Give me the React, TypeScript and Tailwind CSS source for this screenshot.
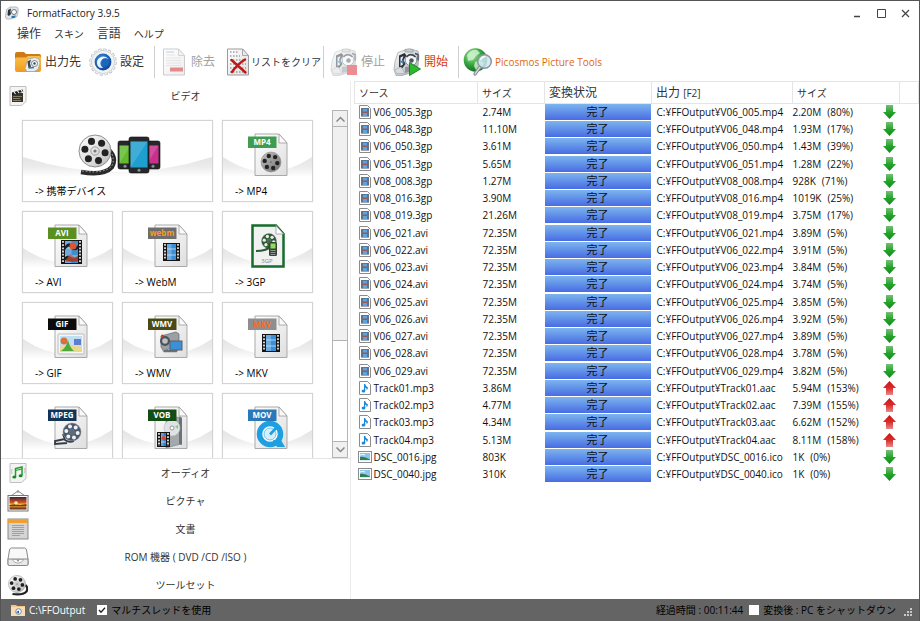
import { useState, type ReactNode } from 'react'

type Kind = 'video' | 'audio' | 'image'

const rows: { kind: Kind; name: string; size: string; out: string; outSize: string; ratio: number }[] = [
  { kind: 'video', name: 'V06_005.3gp', size: '2.74M', out: 'V06_005.mp4', outSize: '2.20M', ratio: 80 },
  { kind: 'video', name: 'V06_048.3gp', size: '11.10M', out: 'V06_048.mp4', outSize: '1.93M', ratio: 17 },
  { kind: 'video', name: 'V06_050.3gp', size: '3.61M', out: 'V06_050.mp4', outSize: '1.43M', ratio: 39 },
  { kind: 'video', name: 'V06_051.3gp', size: '5.65M', out: 'V06_051.mp4', outSize: '1.28M', ratio: 22 },
  { kind: 'video', name: 'V08_008.3gp', size: '1.27M', out: 'V08_008.mp4', outSize: '928K', ratio: 71 },
  { kind: 'video', name: 'V08_016.3gp', size: '3.90M', out: 'V08_016.mp4', outSize: '1019K', ratio: 25 },
  { kind: 'video', name: 'V08_019.3gp', size: '21.26M', out: 'V08_019.mp4', outSize: '3.75M', ratio: 17 },
  { kind: 'video', name: 'V06_021.avi', size: '72.35M', out: 'V06_021.mp4', outSize: '3.89M', ratio: 5 },
  { kind: 'video', name: 'V06_022.avi', size: '72.35M', out: 'V06_022.mp4', outSize: '3.91M', ratio: 5 },
  { kind: 'video', name: 'V06_023.avi', size: '72.35M', out: 'V06_023.mp4', outSize: '3.84M', ratio: 5 },
  { kind: 'video', name: 'V06_024.avi', size: '72.35M', out: 'V06_024.mp4', outSize: '3.74M', ratio: 5 },
  { kind: 'video', name: 'V06_025.avi', size: '72.35M', out: 'V06_025.mp4', outSize: '3.85M', ratio: 5 },
  { kind: 'video', name: 'V06_026.avi', size: '72.35M', out: 'V06_026.mp4', outSize: '3.92M', ratio: 5 },
  { kind: 'video', name: 'V06_027.avi', size: '72.35M', out: 'V06_027.mp4', outSize: '3.89M', ratio: 5 },
  { kind: 'video', name: 'V06_028.avi', size: '72.35M', out: 'V06_028.mp4', outSize: '3.78M', ratio: 5 },
  { kind: 'video', name: 'V06_029.avi', size: '72.35M', out: 'V06_029.mp4', outSize: '3.82M', ratio: 5 },
  { kind: 'audio', name: 'Track01.mp3', size: '3.86M', out: 'Track01.aac', outSize: '5.94M', ratio: 153 },
  { kind: 'audio', name: 'Track02.mp3', size: '4.77M', out: 'Track02.aac', outSize: '7.39M', ratio: 155 },
  { kind: 'audio', name: 'Track03.mp3', size: '4.34M', out: 'Track03.aac', outSize: '6.62M', ratio: 152 },
  { kind: 'audio', name: 'Track04.mp3', size: '5.13M', out: 'Track04.aac', outSize: '8.11M', ratio: 158 },
  { kind: 'image', name: 'DSC_0016.jpg', size: '803K', out: 'DSC_0016.ico', outSize: '1K', ratio: 0 },
  { kind: 'image', name: 'DSC_0040.jpg', size: '310K', out: 'DSC_0040.ico', outSize: '1K', ratio: 0 },
]

/* ---------- shared gradients ---------- */

function Defs() {
  return (
    <svg width="0" height="0" className="absolute" aria-hidden>
      <defs>
        <linearGradient id="paper" x1="0" y1="0" x2="1" y2="1">
          <stop offset="0" stopColor="#ffffff" />
          <stop offset="1" stopColor="#dedede" />
        </linearGradient>
        <linearGradient id="steel" x1="0" y1="0" x2="1" y2="1">
          <stop offset="0" stopColor="#ffffff" />
          <stop offset="1" stopColor="#a3a8ad" />
        </linearGradient>
        <linearGradient id="disc" x1="0" y1="0" x2="1" y2="1">
          <stop offset="0" stopColor="#ffffff" />
          <stop offset="0.6" stopColor="#dcdcdc" />
          <stop offset="1" stopColor="#b4b4b4" />
        </linearGradient>
        <linearGradient id="smoke" x1="0" y1="0" x2="1" y2="1">
          <stop offset="0" stopColor="#c4c4c4" />
          <stop offset="1" stopColor="#6e6e6e" />
        </linearGradient>
        <linearGradient id="swoosh" x1="0" y1="0" x2="0" y2="1">
          <stop offset="0" stopColor="#e4e4e4" />
          <stop offset="0.5" stopColor="#ececec" />
          <stop offset="1" stopColor="#ffffff" />
        </linearGradient>
        <linearGradient id="folder" x1="0" y1="0" x2="0" y2="1">
          <stop offset="0" stopColor="#fbc14b" />
          <stop offset="1" stopColor="#f09a1c" />
        </linearGradient>
        <linearGradient id="down" x1="0" y1="0" x2="0" y2="1">
          <stop offset="0" stopColor="#77bf77" />
          <stop offset="0.5" stopColor="#25a52b" />
          <stop offset="1" stopColor="#128a1c" />
        </linearGradient>
        <linearGradient id="up" x1="0" y1="0" x2="0" y2="1">
          <stop offset="0" stopColor="#c91414" />
          <stop offset="0.5" stopColor="#dc2a2a" />
          <stop offset="1" stopColor="#e58a8a" />
        </linearGradient>
        <linearGradient id="sunset" x1="0" y1="0" x2="0" y2="1">
          <stop offset="0" stopColor="#3d2440" />
          <stop offset="0.45" stopColor="#d8541c" />
          <stop offset="0.6" stopColor="#ffc23a" />
          <stop offset="1" stopColor="#5b1b14" />
        </linearGradient>
        <radialGradient id="globe" cx="0.35" cy="0.3" r="0.8">
          <stop offset="0" stopColor="#a9e8a6" />
          <stop offset="0.5" stopColor="#36a63f" />
          <stop offset="1" stopColor="#0c5a1b" />
        </radialGradient>
        <radialGradient id="blueball" cx="0.4" cy="0.35" r="0.7">
          <stop offset="0" stopColor="#3f93dc" />
          <stop offset="1" stopColor="#0b3f94" />
        </radialGradient>
      </defs>
    </svg>
  )
}

/* ---------- drawing pieces ---------- */

const holes = [10, 70, 130, 190, 250, 310]

function Reel({ cx, cy, r, body = 'url(#disc)', hole = '#222' }: { cx: number; cy: number; r: number; body?: string; hole?: string }) {
  return (
    <g>
      <circle cx={cx} cy={cy} r={r} fill={body} stroke="#8a8a8a" strokeWidth={r * 0.06} />
      {holes.map((a) => (
        <circle
          key={a}
          cx={cx + Math.cos((a * Math.PI) / 180) * r * 0.64}
          cy={cy + Math.sin((a * Math.PI) / 180) * r * 0.64}
          r={r * 0.22}
          fill={hole}
        />
      ))}
      <circle cx={cx} cy={cy} r={r * 0.26} fill="none" stroke="#9a9a9a" strokeWidth={r * 0.06} />
      <circle cx={cx} cy={cy} r={r * 0.1} fill="#777" />
    </g>
  )
}

function Strip({ x, y, w, h, fill = '#3b8fd6' }: { x: number; y: number; w: number; h: number; fill?: string }) {
  return (
    <g>
      <rect x={x} y={y} width={w} height={h} fill="#151515" />
      <rect x={x + 4} y={y + 1} width={w - 8} height={h - 2} fill={fill} />
      <rect x={x + 4} y={y + 1} width={(w - 8) / 2} height={h - 2} fill="#fff" opacity="0.25" />
      <path d={`M${x + 4} ${y + h / 3}h${w - 8}M${x + 4} ${y + (2 * h) / 3}h${w - 8}`} stroke="#d7ecfb" strokeWidth="0.7" />
      <path d={`M${x + 2} ${y + 1}v${h - 2}M${x + w - 2} ${y + 1}v${h - 2}`} stroke="#fff" strokeWidth="1.6" strokeDasharray="1.8 1.4" />
    </g>
  )
}

function Camera({ children }: { children?: ReactNode }) {
  return (
    <svg width="28" height="28" viewBox="0 0 28 28" aria-hidden>
      <path d="M5 4.500L12 2q7-1.500 13 1l1 6-1 9-4 6-12 3.500H3L1 21.500l1-8z" fill="url(#steel)" stroke="#a4a9ae" strokeWidth="0.8" />
      <path d="M12 1.500q5-1.500 8 0v2.500h-8z" fill="#c8cdd1" stroke="#858b91" strokeWidth="0.6" />
      <path d="M6 7.500l5.500-2.500 2 2.500-3 4.500 2 4-3.500 4.500-3-1.500z" fill="#2b343c" />
      <path d="M7.500 9.500l3-1.500-1.500 4 1 4.500-2.500 1.500z" fill="#e9eef2" />
      <path d="M6.500 13.500l4-1.500v4z" fill="#3c88c4" />
      <circle cx="18" cy="12" r="5.800" fill="#f3f5f6" stroke="#8b9299" />
      <path d="M13.500 9q4-4.500 9 0" stroke="#39424a" strokeWidth="1.400" fill="none" />
      <circle cx="18.500" cy="12.500" r="2.200" fill="#4b5862" />
      <path d="M22 5.500l3 1v6" stroke="#4a5259" strokeWidth="1.400" fill="none" />
      <path d="M1.500 22l6.500-3 4 6.500H4z" fill="#d8dcdf" stroke="#a0a6ab" strokeWidth="0.6" />
      <path d="M12 19l9-1-2 5-7 2z" fill="#8e969c" />
      {children}
    </svg>
  )
}

function Page({ children }: { children?: ReactNode }) {
  return (
    <svg width="22" height="28" viewBox="0 0 22 28" aria-hidden>
      <path d="M.5 1h15l6 6.500V27H.5z" fill="url(#paper)" stroke="#9b9b9b" />
      <path d="M15.500 1v6.500h6z" fill="#e9e9e9" stroke="#9b9b9b" strokeWidth="0.8" />
      {children}
    </svg>
  )
}

/* ---------- toolbar icons ---------- */

const FolderIcon = () => (
  <svg width="28" height="22" viewBox="0 0 28 22" aria-hidden>
    <path d="M1 3q0-2 2-2h7l2 2h13q2 0 2 2v3H1z" fill="#cf7a14" />
    <path d="M1 8q0-1.500 1.500-1.500H12l2-1.500h11q2 0 2 2v12q0 2-2 2H3q-2 0-2-2z" fill="url(#folder)" />
    <path d="M14 8l7-1.500 4 1.500 1 4-2 6.500-4 2h-7l-2-3z" fill="#e9edef" stroke="#9aa0a5" strokeWidth="0.7" />
    <path d="M13.500 10.500l3.500-2-1 4 1 3-2.500 2z" fill="#3a464f" />
    <circle cx="20.500" cy="12.500" r="3" fill="#fff" stroke="#7a848b" />
    <circle cx="20.500" cy="12.500" r="1.200" fill="#3a464f" />
    <path d="M15 17l5-.5" stroke="#2f7cba" strokeWidth="1.500" />
  </svg>
)

const GearIcon = () => (
  <svg width="28" height="30" viewBox="0 0 28 30" aria-hidden>
    <circle cx="14" cy="15" r="12.300" fill="none" stroke="#a3a8ac" strokeWidth="2.600" strokeDasharray="3 1.830" />
    <circle cx="14" cy="15" r="11.600" fill="#f1f2f3" stroke="#c0c4c7" strokeWidth="0.8" />
    <circle cx="14" cy="15" r="12.300" fill="none" stroke="#eef0f1" strokeWidth="1.600" strokeDasharray="2.400 2.430" strokeDashoffset="-0.300" />
    <circle cx="14" cy="15" r="8.400" fill="url(#blueball)" />
    <path d="M8.500 18.500Q6.500 13 11 10.500t8.500 1.500Q14 10.500 12 14t2 7Q10 21.500 8.500 18.500z" fill="#e9f4fc" />
    <circle cx="16.300" cy="15" r="3.800" fill="#1b67bd" />
  </svg>
)

const RemoveIcon = () => (
  <span className="opacity-50">
    <Page>
      <path d="M3 4h8" stroke="#67a9d8" />
      <path d="M3 7h9M3 10h15M3 12.500h15M3 15h15M3 17.500h15" stroke="#c3c3c3" strokeWidth="0.8" />
      <rect x="7" y="19.500" width="13" height="4" fill="#cc1818" />
    </Page>
  </span>
)

const ClearIcon = () => (
  <Page>
    <path d="M3 4h9M3 8h10M3 12h16M3 16h16M3 20h16M3 24h16" stroke="#777" strokeWidth="1.100" strokeDasharray="1.500 1.500" />
    <path d="M4.500 12l14 12.500M18 11.500Q10 16.500 5 24" stroke="#c01818" strokeWidth="2.400" fill="none" strokeLinecap="round" />
  </Page>
)

const StopIcon = () => (
  <span className="opacity-50">
    <Camera>
      <rect x="17" y="17" width="10" height="10" fill="#d81e28" />
    </Camera>
  </span>
)

const StartIcon = () => (
  <Camera>
    <path d="M16.500 14.500L27.500 21l-11 6.500z" fill="#2db82f" stroke="#0f7014" strokeWidth="0.8" />
  </Camera>
)

const GlobeIcon = () => (
  <svg width="30" height="30" viewBox="0 0 30 30" aria-hidden>
    <circle cx="12.500" cy="13" r="11.800" fill="url(#globe)" />
    <path d="M4 8Q8 2 14 3l3 3-4 3-3 4-5 1zM12 15l5-2 4 3-3 6-5 1-2-4z" fill="#d5f3d2" opacity="0.8" />
    <path d="M17 20l-5 7" stroke="#8a8f94" strokeWidth="3.400" strokeLinecap="round" />
    <path d="M17 20l-5 7" stroke="#e4e7e9" strokeWidth="1.200" strokeLinecap="round" />
    <circle cx="21.500" cy="14.500" r="6.800" fill="#cfe6f5" fillOpacity="0.85" stroke="#8b959d" strokeWidth="1.500" />
    <path d="M17.500 13q1.500-4 5-3.500" stroke="#fff" strokeWidth="1.500" fill="none" />
  </svg>
)

/* ---------- category icons ---------- */

const VideoIcon = () => (
  <svg width="18" height="20" viewBox="0 0 18 20" aria-hidden>
    <path d="M1 .5h16v15L12.500 19.500H1z" fill="#f3f3f3" stroke="#c0c0c0" />
    <rect x="3" y="7" width="11" height="9" fill="#37322a" />
    <path d="M3 6.500l10.500-3 .8 2.300L3 9z" fill="#1d1d1d" />
    <path d="M5 6l1.500 2M8.500 5l1.500 2M12 4l1.500 2" stroke="#fff" strokeWidth="1.100" />
    <path d="M4 10.500h9M4 12.500h7M4 14.500h8" stroke="#a89c84" strokeWidth="0.7" />
  </svg>
)

const AudioIcon = () => (
  <svg width="18" height="20" viewBox="0 0 18 20" aria-hidden>
    <path d="M1 .5h16v15L12.500 19.500H1z" fill="#f3f3f3" stroke="#c0c0c0" />
    <path d="M6.500 14V5.500L13 4v8.500" stroke="#22a02a" strokeWidth="1.500" fill="none" />
    <path d="M6.500 7.500L13 6" stroke="#22a02a" strokeWidth="1.200" />
    <ellipse cx="5.300" cy="14" rx="2" ry="1.500" fill="#178c20" />
    <ellipse cx="11.600" cy="12.800" rx="2" ry="1.500" fill="#178c20" />
    <path d="M3 6q-1 3 0 5M15.500 5q1 3 0 5" stroke="#aaa" strokeWidth="0.7" fill="none" />
  </svg>
)

const PictureIcon = () => (
  <svg width="22" height="22" viewBox="0 0 22 22" aria-hidden>
    <path d="M3 6.500L11 1l8 5.500" stroke="#888" fill="none" />
    <circle cx="11" cy="1.500" r="1.200" fill="#999" />
    <rect x="1" y="5.500" width="20" height="15.500" fill="#fff" stroke="#777" />
    <rect x="2.500" y="7" width="17" height="12.500" fill="url(#sunset)" />
    <path d="M2.500 15l6-1 4 1 7-1v2h-17z" fill="#3a1012" opacity="0.7" />
    <circle cx="9" cy="13" r="1.800" fill="#fff0a0" />
  </svg>
)

const DocumentIcon = () => (
  <svg width="22" height="22" viewBox="0 0 22 22" aria-hidden>
    <rect x="1" y="1" width="20" height="20" fill="#d4d4d4" stroke="#8a8a8a" />
    <rect x="1" y="1" width="20" height="4" fill="#f0a030" />
    <path d="M5 7.500h12M5 9.500h12M5 11.500h12M5 13.500h12M5 15.500h12M5 17.500h8" stroke="#9a9a9a" strokeWidth="0.9" />
  </svg>
)

const DriveIcon = () => (
  <svg width="22" height="20" viewBox="0 0 22 20" aria-hidden>
    <path d="M4.500 1h13Q19 1 19.500 3L21 12v5q0 1.500-1.500 1.500h-17Q1 18.500 1 17v-5l1.500-9Q3 1 4.500 1z" fill="#f8f8f8" stroke="#888" />
    <path d="M1 12h20v5q0 1.500-1.500 1.500h-17Q1 18.500 1 17z" fill="#e8e8e8" stroke="#888" />
    <path d="M5 12.500Q11 20 17 12.500z" fill="#fafafa" stroke="#999" strokeWidth="0.8" />
    <circle cx="11" cy="13.500" r="1" fill="#888" />
  </svg>
)

const ToolsIcon = () => (
  <svg width="20" height="21" viewBox="0 0 20 21" aria-hidden>
    <path d="M17.500 10q3 3 1 6.500-4 4-14 2.500" stroke="#222" strokeWidth="2.200" fill="none" />
    <Reel cx={9} cy={9} r={8.5} />
  </svg>
)

/* ---------- format icons ---------- */

function FormatIcon({ tag, color, ink = '#fff', children }: { tag: string; color: string; ink?: string; children: ReactNode }) {
  return (
    <svg width="40" height="44" viewBox="0 0 40 44" aria-hidden>
      <path d="M7 1h24l8 9v32.500H7z" fill="url(#paper)" stroke="#a9a9a9" />
      <path d="M31 1v9h8z" fill="#fafafa" stroke="#9c9c9c" strokeWidth="0.8" />
      {children}
      <rect x="0" y="3.500" width="28.500" height="11.500" fill={color} />
      <text x="14" y="12" textAnchor="middle" fontSize="8" fontWeight="700" fontFamily="'Open Sans', 'Liberation Sans', sans-serif" fill={ink}>
        {tag}
      </text>
    </svg>
  )
}

const phones = [
  { x: 40, y: 7, w: 14, h: 28, fill: '#62bb2f' },
  { x: 68, y: 7, w: 14, h: 28, fill: '#c92f8c' },
  { x: 51, y: 3, w: 20, h: 36, fill: '#1f9fd0' },
]

const MobileIcon = () => (
  <svg width="87" height="43" viewBox="-4 0 87 43" aria-hidden>
    {phones.map((p) => (
      <g key={p.fill}>
        <rect x={p.x} y={p.y} width={p.w} height={p.h} rx="2" fill="#26282b" stroke="#0e0e0e" strokeWidth="0.6" />
        <rect x={p.x + 1.5} y={p.y + 4.5} width={p.w - 3} height={p.h - 10} fill={p.fill} />
        <path d={`M${p.x + 1.5} ${p.y + p.h - 5.5}L${p.x + p.w - 1.5} ${p.y + 4.5}H${p.x + 1.5}z`} fill="#fff" opacity="0.15" />
        <circle cx={p.x + p.w / 2} cy={p.y + p.h - 2.7} r="1.500" fill="#8a8f94" />
      </g>
    ))}
    <path d="M31 16q8 8 3 17-8 9-31 5" stroke="#2a2a2a" strokeWidth="4.500" fill="none" />
    <path d="M34 20q3 8-1 13-8 7-29 4" stroke="#ccc" strokeWidth="0.8" fill="none" strokeDasharray="1.500 2" />
    <Reel cx={17} cy={17} r={16} />
  </svg>
)

const ThreeGpIcon = () => (
  <svg width="34" height="44" viewBox="0 0 34 44" aria-hidden>
    <path d="M1.500 1.500H25L32.500 10v32.500h-31z" fill="#f1f1f1" stroke="#176b2c" strokeWidth="2.500" />
    <path d="M25 1.500V10h7.500z" fill="#fff" stroke="#999" strokeWidth="0.8" />
    <Reel cx={18} cy={17} r={7.5} body="#2c5a36" hole="#e8eee9" />
    <path d="M5 27q10 0 14-4" stroke="#2c5a36" strokeWidth="2" fill="none" />
    <rect x="18" y="18" width="8" height="14" rx="1.500" fill="#39403b" />
    <rect x="19.500" y="19.500" width="5" height="5" fill="#8ede5c" />
    <path d="M19.500 26.500h5M19.500 28.500h5M19.500 30.500h5" stroke="#aab0ab" strokeWidth="0.8" />
    <text x="16" y="39" textAnchor="middle" fontSize="6" fontFamily="'Open Sans', sans-serif" fill="#888">3GP</text>
  </svg>
)

// tiles without a caption only carry the name printed on their icon
const tiles: { name: string; caption?: boolean; wide?: boolean; icon: ReactNode }[] = [
  { name: '携帯デバイス', caption: true, wide: true, icon: <MobileIcon /> },
  {
    name: 'MP4',
    caption: true,
    icon: (
      <FormatIcon tag="MP4" color="#3f9d52">
        <Reel cx={23} cy={29} r={10} body="url(#smoke)" />
      </FormatIcon>
    ),
  },
  {
    name: 'AVI',
    caption: true,
    icon: (
      <FormatIcon tag="AVI" color="#5a8f22">
        <Strip x={13} y={16} w={21} h={24} fill="#3f8fd0" />
        <path d="M17 22q4-5 7-1t6 0v4q-5 3-7-1t-6 2zM17 33q3-3 6 0t7-1v5l-6 1-7-2z" fill="#17202c" />
        <circle cx="25" cy="22" r="3.500" fill="#e2552a" />
        <path d="M18 36l4-6 5 4 3-3v7H18z" fill="#d34f2c" opacity="0.7" />
      </FormatIcon>
    ),
  },
  {
    name: 'WebM',
    caption: true,
    icon: (
      <FormatIcon tag="webm" color="#6e6e6e" ink="#ff9a1a">
        <Strip x={15} y={19} w={17} h={18} />
      </FormatIcon>
    ),
  },
  { name: '3GP', caption: true, icon: <ThreeGpIcon /> },
  {
    name: 'GIF',
    caption: true,
    icon: (
      <FormatIcon tag="GIF" color="#0c0c0c">
        <rect x="10" y="19" width="26" height="20" rx="1" fill="#f6f6f6" stroke="#bdbdbd" />
        <rect x="12" y="21" width="22" height="16" fill="#bfe0f2" />
        <path d="M12 32q10-4 22 0v5H12z" fill="#e9d98c" />
        <circle cx="16" cy="26" r="3.500" fill="#d9713c" />
        <rect x="26" y="24" width="7" height="6" fill="#5d7fd0" />
        <path d="M20 25q2 8 6 11H13q5-3 7-11z" fill="#4fa83a" />
      </FormatIcon>
    ),
  },
  {
    name: 'WMV',
    caption: true,
    icon: (
      <FormatIcon tag="WMV" color="#4b4a16">
        <path d="M13 21l15-4 3 2v8l-15 10-3-5z" fill="#9aa0a5" stroke="#666" strokeWidth="0.7" />
        <circle cx="17" cy="26" r="5" fill="#4c5257" />
        <circle cx="17" cy="26" r="2.800" fill="#b9c0c6" />
        <path d="M16 36h12l2-3" stroke="#6a7075" strokeWidth="2.500" fill="none" />
        <circle cx="14.500" cy="21" r="1.500" fill="#d23b2a" />
        <rect x="22" y="26" width="12" height="9" fill="#3c90d6" stroke="#5b6166" />
      </FormatIcon>
    ),
  },
  {
    name: 'MKV',
    caption: true,
    icon: (
      <FormatIcon tag="MKV" color="#8e8e8e" ink="#ff6a14">
        <Strip x={14} y={19} w={18} h={18} />
      </FormatIcon>
    ),
  },
  {
    name: 'MPEG',
    icon: (
      <FormatIcon tag="MPEG" color="#143455">
        <path d="M15 28l2 6q4 3 9 1M17 33l-10 2v3l12-1" stroke="#333b46" strokeWidth="1.800" fill="none" />
        <Reel cx={24} cy={26} r={9} body="#4a5a70" hole="#f0f2f5" />
      </FormatIcon>
    ),
  },
  {
    name: 'VOB',
    icon: (
      <FormatIcon tag="VOB" color="#124d16">
        <path d="M18 12l15-1v27l-15 4z" fill="#a3a9ad" stroke="#777" strokeWidth="0.6" />
        <path d="M31 11l3 1v27l-3-1z" fill="#6c7378" />
        <circle cx="24" cy="22" r="8" fill="#dfe3e5" stroke="#b5b9bc" strokeWidth="0.6" />
        <circle cx="24" cy="22" r="2" fill="#fff" stroke="#999" />
        <path d="M27 20.500l3-1.500v4z" fill="#7fd16c" />
        <Strip x={9} y={26} w={13} h={15} fill="#2f7fd0" />
        <circle cx="15.500" cy="32" r="2" fill="#d8482c" />
      </FormatIcon>
    ),
  },
  {
    name: 'MOV',
    icon: (
      <FormatIcon tag="MOV" color="#2a78b8">
        <circle cx="22" cy="28" r="10.500" fill="#fff" stroke="#1e9fe2" strokeWidth="5.500" />
        <circle cx="22" cy="28" r="6" fill="#d8effb" stroke="#6fc3ee" strokeWidth="1" />
        <path d="M22 28.500l6-6.500" stroke="#1e9fe2" strokeWidth="2.600" />
        <path d="M25 34h8l4 7h-8z" fill="#1e9fe2" />
      </FormatIcon>
    ),
  },
]

const categories = [
  { label: 'オーディオ', icon: <AudioIcon /> },
  { label: 'ピクチャ', icon: <PictureIcon /> },
  { label: '文書', icon: <DocumentIcon /> },
  { label: 'ROM 機器 ( DVD /CD /ISO )', icon: <DriveIcon /> },
  { label: 'ツールセット', icon: <ToolsIcon /> },
]

/* ---------- list icons ---------- */

function FileIcon({ kind }: { kind: Kind }) {
  if (kind === 'image') {
    return (
      <svg width="14" height="12" viewBox="0 0 14 12" className="shrink-0" aria-hidden>
        <rect x=".5" y=".5" width="13" height="11" fill="#fff" stroke="#8c8c8c" />
        <rect x="2" y="2" width="10" height="8" fill="#8cc4ec" />
        <path d="M2 6q4-1 10 2.500V9H2z" fill="#2f7d52" />
        <path d="M2 9h10v1H2z" fill="#dcebf5" />
        <path d="M2 4q3-1 5 0" stroke="#fff" fill="none" />
      </svg>
    )
  }
  return (
    <svg width="12" height="14" viewBox="0 0 12 14" className="mx-px shrink-0" aria-hidden>
      <path d="M.5.5h8l3 3v10H.5z" fill="#fff" stroke="#8c8c8c" />
      {kind === 'video' ? (
        <g>
          <rect x="2" y="3" width="8" height="8.500" fill="#3d4f66" />
          <rect x="4" y="3.500" width="4" height="3.300" fill="#5aa5e0" />
          <rect x="4" y="7.700" width="4" height="3.300" fill="#5aa5e0" />
          <path d="M4 7.200h4" stroke="#d04a3a" />
          <path d="M3 3.500v8M9 3.500v8" stroke="#fff" strokeWidth="0.8" strokeDasharray="1 1" />
        </g>
      ) : (
        <g fill="#1e88d8">
          <path d="M5 3h1.200q.3 2 2.800 3.500-.2 2-1.500 2.500.6-2-1.300-2.500V10H5z" />
          <ellipse cx="4.500" cy="10" rx="1.900" ry="1.500" />
        </g>
      )}
    </svg>
  )
}

function Arrow({ up }: { up: boolean }) {
  return (
    <svg width="13" height="14" viewBox="0 0 13 14" className="shrink-0" aria-hidden>
      {up ? <path d="M6.500 0L13 7H10v7H3V7H0z" fill="url(#up)" /> : <path d="M3 0h7v7h3l-6.500 7L0 7h3z" fill="url(#down)" />}
    </svg>
  )
}

function Tile({ name, caption, wide, icon }: { name: string; caption?: boolean; wide?: boolean; icon: ReactNode }) {
  return (
    <button
      aria-label={name}
      className={`relative flex h-[82px] flex-col items-start border border-[#d4d4d4] bg-white shadow-[0_0_1px_#d4d4d4] ${wide ? 'col-span-2' : ''}`}
    >
      <svg className="absolute inset-0 h-full w-full" viewBox="0 0 100 80" preserveAspectRatio="none" aria-hidden>
        <path d="M0 36Q50 66 100 36V56H0z" fill="url(#swoosh)" />
      </svg>
      <span className="relative mt-3 flex h-11 w-full items-center justify-center">{icon}</span>
      {caption && <span className="relative mt-1 pl-3 text-[10px] leading-5 text-black">-&gt; {name}</span>}
    </button>
  )
}

function ToolButton({ icon, label, className = '' }: { icon: ReactNode; label: string; className?: string }) {
  return (
    <button className={`flex items-center whitespace-nowrap leading-4 ${className}`}>
      {icon}
      {label}
    </button>
  )
}

const Separator = () => <span className="h-8 w-px bg-[#cfcfcf]" />

export default function App() {
  const [multi, setMulti] = useState(true)
  const [shutdown, setShutdown] = useState(false)

  return (
    <div className="flex h-screen flex-col overflow-hidden border-t border-r border-l border-[#555] bg-white font-['Open_Sans','Noto_Sans_CJK_JP',sans-serif] text-[12px] text-[#333]">
      <Defs />

      <header className="flex h-6 shrink-0 items-center pr-2 pl-1">
        <svg width="14" height="14" viewBox="0 0 28 28" aria-hidden>
          <path d="M10 2h13l3 2v9l-3 9-12 4H3l-2-4 2-15z" fill="#e1e6ea" stroke="#a0a8b0" strokeWidth="1.500" />
          <path d="M6 8l6-3-1 6 1 5-4 4-3-2z" fill="#2b343c" />
          <circle cx="18" cy="12" r="5" fill="#fff" stroke="#6c767e" strokeWidth="2" />
          <path d="M13 20l9-1-3 5h-6z" fill="#2678b8" />
        </svg>
        <h1 className="ml-2 text-[10px] text-[#222]">FormatFactory 3.9.5</h1>
        <div className="ml-auto flex gap-3">
          <button aria-label="最小化" className="flex size-3 items-center justify-center">
            <svg width="9" height="9" viewBox="0 0 9 9"><path d="M1 7.500h6" stroke="#444" strokeWidth="1.500" /></svg>
          </button>
          <button aria-label="最大化" className="flex size-3 items-center justify-center">
            <svg width="9" height="9" viewBox="0 0 9 9"><path d="M.5.5h8v8h-8z" fill="none" stroke="#444" /></svg>
          </button>
          <button aria-label="閉じる" className="flex size-3 items-center justify-center">
            <svg width="9" height="9" viewBox="0 0 9 9"><path d="M1 1l7 7M8 1L1 8" stroke="#444" strokeWidth="1.200" /></svg>
          </button>
        </div>
      </header>

      <nav className="flex h-[18px] shrink-0 items-center gap-[13px] pl-4 leading-4">
        <button>操作</button>
        <button className="text-[10px]">スキン</button>
        <button>言語</button>
        <button className="text-[10px]">ヘルプ</button>
      </nav>

      <div className="flex h-[38px] shrink-0 items-center pl-[13px]">
        <ToolButton icon={<FolderIcon />} label="出力先" className="gap-[3px]" />
        <ToolButton icon={<GearIcon />} label="設定" className="ml-2 gap-[3px]" />
        <span className="w-2.5" />
        <Separator />
        <ToolButton icon={<RemoveIcon />} label="除去" className="ml-2 gap-1.5 text-[#a0a0a0]" />
        <ToolButton icon={<ClearIcon />} label="リストをクリア" className="ml-3 gap-0.5 text-[10px]" />
        <span className="w-0.5" />
        <Separator />
        <ToolButton icon={<StopIcon />} label="停止" className="ml-1.5 gap-[3px] text-[#a0a0a0]" />
        <ToolButton icon={<StartIcon />} label="開始" className="ml-2 gap-[3px] text-[#d83a10]" />
        <span className="w-2.5" />
        <Separator />
        <ToolButton icon={<GlobeIcon />} label="Picosmos Picture Tools" className="ml-1 gap-0.5 text-[10px] text-[#e2690f]" />
      </div>

      <main className="flex min-h-0 flex-1">
        <aside className="flex w-[350px] shrink-0 flex-col border-r border-[#ececec]">
          <button className="relative mt-px flex h-7 shrink-0 items-center justify-center text-[10px]">
            <span className="absolute left-2"><VideoIcon /></span>
            <span className="pl-5">ビデオ</span>
          </button>
          <div className="flex min-h-0 flex-1 border-b border-[#e4e4e4]">
            <div className="min-h-0 flex-1 overflow-hidden pt-2.5 pr-[19px] pl-[21px]">
              <div className="grid grid-cols-3 gap-[9px]">
                {tiles.map((t) => (
                  <Tile key={t.name} {...t} />
                ))}
              </div>
            </div>
            <div className="mr-0.5 flex w-4 flex-col border border-[#b4b4b4] bg-white">
              <button aria-label="上へ" className="flex h-4 items-center justify-center border-b border-[#b4b4b4] bg-[#f0f0f0]">
                <svg width="9" height="6" viewBox="0 0 9 6"><path d="M.5 5.500l4-4 4 4" fill="none" stroke="#888" strokeWidth="1.500" /></svg>
              </button>
              <div className="grow-[15] basis-0 border-b border-[#b4b4b4] bg-[#f0f0f0]" />
              <div className="grow-[7] basis-0" />
              <button aria-label="下へ" className="flex h-4 items-center justify-center border-t border-[#b4b4b4] bg-[#f0f0f0]">
                <svg width="9" height="6" viewBox="0 0 9 6"><path d="M.5.5l4 4 4-4" fill="none" stroke="#888" strokeWidth="1.500" /></svg>
              </button>
            </div>
          </div>
          {categories.map((c) => (
            <button key={c.label} className="relative flex h-7 shrink-0 items-center justify-center text-[10px]">
              <span className="absolute left-1.5 flex w-[22px] justify-center">{c.icon}</span>
              <span className="pl-5">{c.label}</span>
            </button>
          ))}
        </aside>

        <section className="min-w-0 flex-1 overflow-hidden pl-[3px]">
          <table className="w-full table-fixed border-collapse whitespace-nowrap">
            <colgroup>
              <col className="w-[123px]" />
              <col className="w-[67px]" />
              <col className="w-[107px]" />
              <col className="w-[141px]" />
              <col className="w-[107px]" />
              <col />
            </colgroup>
            <thead>
              <tr className="h-[22px] border border-[#e5e5e5] text-left leading-4 [&>th]:border-r [&>th]:border-[#e5e5e5] [&>th]:p-0 [&>th]:pl-1 [&>th]:font-normal">
                <th className="text-[10px]">ソース</th>
                <th className="text-[10px]">サイズ</th>
                <th>変換状況</th>
                <th>出力 <span className="text-[10px]">[F2]</span></th>
                <th className="text-[10px]">サイズ</th>
                <th />
              </tr>
            </thead>
            <tbody className="text-[10px] leading-4 text-[#111]">
              {rows.map((r) => (
                <tr key={r.name} className="h-[17px] [&:nth-child(4n)]:h-[18px] [&>td]:p-0">
                  <td>
                    <div className="flex items-center gap-0.5 pl-[3px]">
                      <FileIcon kind={r.kind} />
                      {r.name}
                    </div>
                  </td>
                  <td><span className="pl-[5px]">{r.size}</span></td>
                  <td>
                    <div className="mr-px bg-linear-to-b from-[#7db4ee] to-[#4a6be2] text-center text-[11px]">完了</div>
                  </td>
                  <td><span className="pl-[5px]">C:¥FFOutput¥{r.out}</span></td>
                  <td>
                    <div className="flex items-center gap-1.5">
                      <span>{r.outSize}</span>
                      <span>({r.ratio}%)</span>
                      <span className="ml-auto pr-1"><Arrow up={r.ratio > 100} /></span>
                    </div>
                  </td>
                  <td />
                </tr>
              ))}
            </tbody>
          </table>
        </section>
      </main>

      <footer className="flex h-[22px] shrink-0 items-center bg-[#646464] pr-1.5 pl-2.5 text-[10px] leading-4 whitespace-nowrap text-black">
        <svg width="14" height="12" viewBox="0 0 14 12" aria-hidden>
          <path d="M0 1h5l1 1h8v10H0z" fill="#f2c38a" />
          <path d="M0 3h14v9H0z" fill="#f8dcb8" />
          <circle cx="7.500" cy="7.500" r="2.800" fill="#fff" stroke="#6d87a5" />
          <path d="M5 8l3-1.500v3z" fill="#2c5f95" />
        </svg>
        <a href="#output" className="ml-1 text-white">C:\FFOutput</a>
        <label className="ml-3 flex items-center gap-1">
          <span className="relative flex size-2.5">
            <input type="checkbox" checked={multi} onChange={(e) => setMulti(e.target.checked)} className="size-2.5 appearance-none bg-white" />
            {multi && (
              <svg className="pointer-events-none absolute inset-0" width="10" height="10" viewBox="0 0 10 10"><path d="M2 5l2 2.200L8 2.800" fill="none" stroke="#222" strokeWidth="1.300" /></svg>
            )}
          </span>
          マルチスレッドを使用
        </label>
        <span className="ml-auto">経過時間 : 00:11:44</span>
        <label className="ml-1.5 flex items-center gap-1">
          <input type="checkbox" checked={shutdown} onChange={(e) => setShutdown(e.target.checked)} className="size-2.5 appearance-none bg-white" />
          変換後 : PC をシャットダウン
        </label>
        <svg className="mt-1 ml-2" width="9" height="9" viewBox="0 0 9 9" fill="#c8c8c8" aria-hidden>
          <path d="M6 0h2v2H6zM3 3h2v2H3zM6 3h2v2H6zM0 6h2v2H0zM3 6h2v2H3zM6 6h2v2H6z" />
        </svg>
      </footer>
    </div>
  )
}
